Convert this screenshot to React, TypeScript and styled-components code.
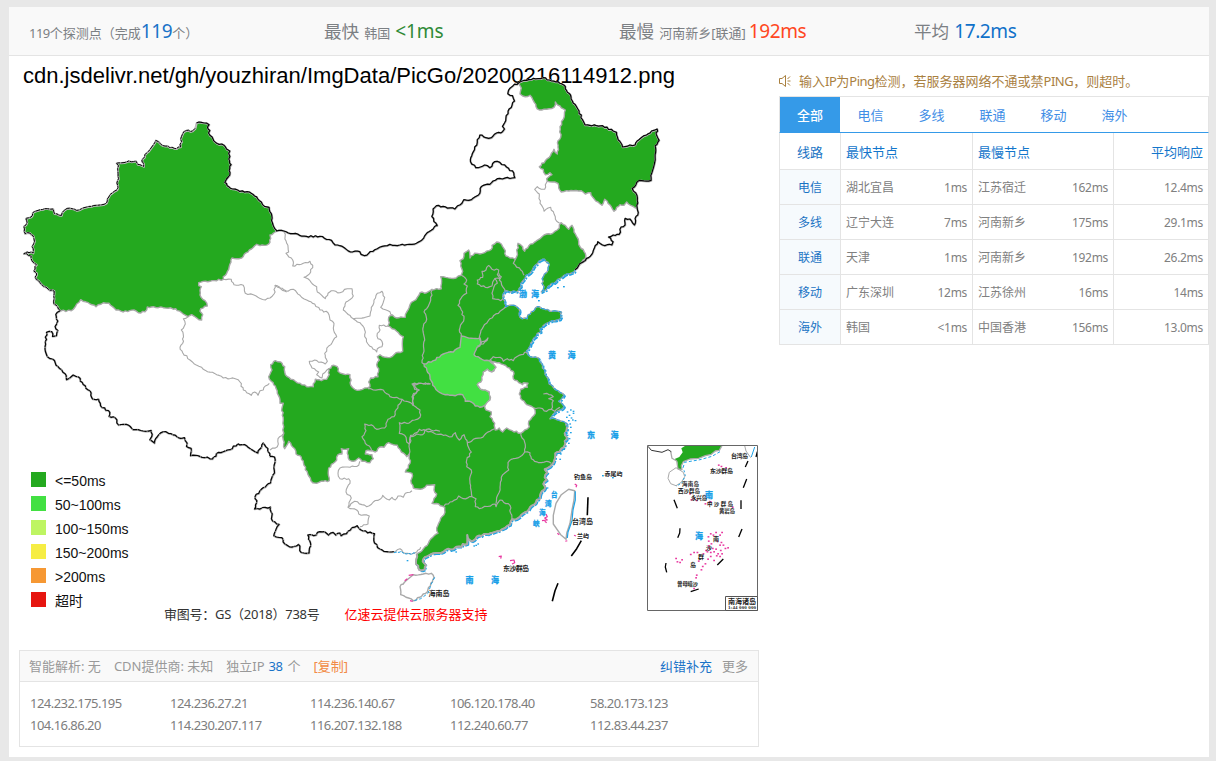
import React from "react";
import styled, { createGlobalStyle } from "styled-components";

const GlobalStyle = createGlobalStyle`
  * { box-sizing: border-box; }
  body {
    margin: 0;
    background: #e8e8e8;
    font-family: "Noto Sans", "Noto Sans CJK SC", sans-serif;
    font-size: 13px;
    color: #888;
  }
`;

/* ---------- layout ---------- */
const Page = styled.div`
  padding: 7px 7px 4px 9px;
  height: 761px;
  overflow: hidden;
`;
const Card = styled.main`
  background: #fff;
  height: 750px;
`;
const StatBar = styled.header`
  display: flex;
  height: 49px;
  padding-left: 20px;
  background: #f9f9f9;
  border-bottom: 1px solid #e4e4e4;
`;
const Stat = styled.div`
  width: 295px;
  height: 48px;
  line-height: 49px;
  white-space: nowrap;
  color: #7c8084;
`;
const StatName = styled.span`
  font-size: 17.6px;
  margin-right: 5px;
`;
const StatValue = styled.span<{ $color: string; $gap?: number; $track?: number }>`
  font-size: 19px;
  color: ${(p) => p.$color};
  margin-left: ${(p) => p.$gap ?? 4}px;
  letter-spacing: ${(p) => p.$track ?? -0.4}px;
`;
const Tight = styled.span<{ $track?: number }>`
  letter-spacing: ${(p) => p.$track ?? -0.5}px;
`;
const Columns = styled.div`
  display: flex;
  justify-content: space-between;
`;
const Left = styled.section`
  width: 750px;
`;
const Right = styled.aside`
  width: 430px;
  padding-top: 14px;
`;

/* ---------- map ---------- */
const MapStage = styled.div`
  position: relative;
  height: 594px;
`;
const MapTitle = styled.h1`
  margin: 0;
  padding: 7px 0 0 14px;
  font: 400 22.03px/26px "Liberation Sans", sans-serif;
  color: #000;
  white-space: nowrap;
`;
const MapSvg = styled.svg`
  position: absolute;
  left: 0;
  top: 0;
`;
const Legend = styled.ul`
  list-style: none;
  margin: 0;
  padding: 380px 0 0 22px;
`;
const LegendItem = styled.li`
  display: flex;
  align-items: center;
  gap: 9px;
  height: 24px;
  font: 14px/24px "Liberation Sans", "Noto Sans CJK SC", sans-serif;
  color: #111;
`;
const Swatch = styled.i<{ $color: string }>`
  width: 15px;
  height: 15px;
  margin-top: -3px;
  background: ${(p) => p.$color};
`;
const Caption = styled.p`
  display: flex;
  gap: 25px;
  margin: -9px 0 0 155px;
  line-height: 20px;
  color: #333;
  white-space: nowrap;
`;
const Sponsor = styled.span`
  color: #f00;
`;

/* ---------- resolved addresses ---------- */
const IpBox = styled.div`
  width: 740px;
  height: 97px;
  margin-left: 10px;
  border: 1px solid #e4e4e4;
`;
const IpHead = styled.div`
  display: flex;
  height: 31px;
  padding: 0 10px 0 9px;
  line-height: 30px;
  background: #f9f9f9;
  border-bottom: 1px solid #e4e4e4;
  color: #999;
  white-space: nowrap;
`;
const HeadItem = styled.span<{ $gap?: number; $color?: string; $push?: boolean }>`
  margin-right: ${(p) => p.$gap ?? 0}px;
  margin-left: ${(p) => (p.$push ? "auto" : 0)};
  color: ${(p) => p.$color ?? "inherit"};
`;
const IpGrid = styled.div`
  display: grid;
  grid-template-columns: repeat(5, 140px);
  padding: 10px 0 0 10px;
  line-height: 22px;
  color: #7d7d7d;
  letter-spacing: -0.54px;
`;

/* ---------- results ---------- */
const Notice = styled.div`
  display: flex;
  align-items: center;
  gap: 8px;
  height: 22px;
  margin-bottom: 4px;
  line-height: 22px;
  color: #a9803f;
  white-space: nowrap;
`;
const Tabs = styled.nav`
  display: flex;
  height: 37px;
  border: 1px solid #e4e4e4;
  border-bottom: 1px solid #359ae8;
`;
const Tab = styled.a<{ $active?: boolean }>`
  width: ${(p) => (p.$active ? 60 : 61)}px;
  line-height: 36px;
  text-align: center;
  font-weight: ${(p) => (p.$active ? 500 : 400)};
  color: ${(p) => (p.$active ? "#fff" : "#3f8ee6")};
  background: ${(p) => (p.$active ? "#359ae8" : "transparent")};
`;
const Table = styled.div`
  border-left: 1px solid #e4e4e4;
`;
const Row = styled.div<{ $head?: boolean }>`
  display: grid;
  grid-template-columns: 60px 132px 141px 96px;
  grid-template-rows: 100%;
  height: ${(p) => (p.$head ? 37 : 35)}px;
  line-height: ${(p) => (p.$head ? 38 : 36)}px;
  font-size: ${(p) => (p.$head ? 13 : 12)}px;
  color: ${(p) => (p.$head ? "#1376cb" : "#808080")};
  border-bottom: 1px solid #e4e4e4;
`;
const Cell = styled.div<{ $align?: string; $label?: boolean; $head?: boolean }>`
  display: flex;
  justify-content: ${(p) => p.$align ?? "space-between"};
  padding: 0 5px;
  border-left: ${(p) => (p.$label ? "none" : "1px solid #e4e4e4")};
  color: ${(p) => (p.$label ? "#1a73c4" : "inherit")};
  background: ${(p) => (p.$label && !p.$head ? "#f6fafd" : "transparent")};
  &:last-child {
    border-right: 1px solid #e4e4e4;
  }
`;

/* ---------- map geometry ---------- */
// Points are stored in a third-of-a-pixel grid relative to the sheet origin (ox, oy).
const at = (ox: number, oy: number, pts: string) =>
  pts
    .trim()
    .split(/\s+/)
    .map((p) => {
      const [x, y] = p.split(",").map(Number);
      return `${(ox + x / 3).toFixed(1)},${(oy + y / 3).toFixed(1)}`;
    })
    .join(" ");

// Breaks long straight runs with small offsets so borders look surveyed, not ruled.
// The offset depends only on the two end points, so shared borders stay identical.
const rough = (pts: string) => {
  const list = pts.split(" ").map((p) => p.split(",").map(Number));
  const out: string[] = [];
  list.forEach(([x, y], i) => {
    out.push(`${x},${y}`);
    const next = list[i + 1];
    if (!next) return;
    const dx = next[0] - x;
    const dy = next[1] - y;
    const len = Math.hypot(dx, dy);
    if (len < 4) return;
    const parts = Math.min(6, Math.round(len / 2.4));
    const flip = dx > 0 || (dx === 0 && dy > 0) ? 1 : -1;
    for (let k = 1; k < parts; k++) {
      const px = x + (dx * k) / parts;
      const py = y + (dy * k) / parts;
      const h = Math.sin(px * 12.9 + py * 78.2) * 0.75 * flip;
      out.push(`${(px - (dy / len) * h).toFixed(1)},${(py + (dx / len) * h).toFixed(1)}`);
    }
  });
  return out.join(" ");
};

const line = (...parts: string[]) => "M" + parts.join(" L");
const shape = (...parts: string[]) => line(...parts) + "Z";

const nw = (p: string) => rough(at(10, 110, p));
const ne = (p: string) => rough(at(400, 70, p));
const sw = (p: string) => rough(at(30, 300, p));
const mid = (p: string) => rough(at(260, 220, p));
const east = (p: string) => rough(at(400, 230, p));
const south = (p: string) => rough(at(240, 380, p));
const se = (p: string) => rough(at(390, 400, p));
const sea = (p: string) => at(390, 400, p);
const inset = (p: string) => at(640, 435, p);

const xjA = nw("560,40 575,38 598,45 593,52 600,62 596,70 607,82 617,98 628,104 636,103 650,118 660,124 657,148 664,165 658,182 660,196 650,208 645,218 652,228 668,238 690,245 712,246 730,254 748,272 764,290 778,293 786,318 788,340 800,362");
const xjB = nw("796,366 780,375 782,385 776,402 750,407 740,403 718,420 695,444 666,444 660,462 652,485 640,500 640,508 600,514 566,518 566,527 574,530 570,555 585,572 592,588 572,596 570,604 578,614 575,630 560,624 545,614 534,620 520,612 497,596 460,593 430,590 412,591 405,605 385,608 372,600 340,606 318,600 297,580 280,578 258,590 235,578 212,569 200,582 184,602 152,603");
const xjC = nw("152,603 132,582 133,544 115,538 90,518 76,502 80,490 72,484 80,465 66,452 64,438 42,432 52,427 70,430 67,410 74,395 70,378 60,370 46,372 42,350 52,338 48,326 64,322 68,310 85,302 105,297 130,298 134,312 155,317 163,302 172,296 200,302 215,297 245,290 290,280 297,262 307,250 322,240 325,200 326,168 320,160 350,157 378,154 384,164 402,170 396,154 410,130 438,92 452,103 480,114 500,117 512,112 515,80 522,66 530,62 548,64 556,56");

const northBorder = [
  mid("50,34 72,34 100,42 140,50 180,50 215,62 226,76 240,78 272,97 300,96 304,104 314,108 345,90 390,74 420,76 456,74 482,64 498,44 520,28 532,16"),
  ne("112,468 96,440 100,418 110,408 130,410 165,418 180,406 192,390 215,390 236,376 245,350 270,344 280,334 300,326 345,324 342,310 320,292 300,278 284,276 270,294 254,286 228,294 212,276 216,258 224,240 240,196 258,204 275,204 290,190 308,186 314,178 308,170 314,160 325,124 344,94 338,78 324,72 326,62 340,48 356,40"),
];
const hljTop = ne("356,40 380,32 400,26 430,24 455,34 475,36 492,46 500,62 512,76 520,100 534,118 548,150 556,166 590,168 608,168 640,184 650,188 655,210 668,232 690,226 706,226 712,214 740,196 755,184 772,178 770,196 778,212 766,228 766,262 756,310 754,332 718,332 708,346 697,356 708,370 714,400 712,414");
const hljIn = ne("706,414 692,406 680,396 672,406 660,404 650,412 642,424 634,410 622,394 614,388 606,406 594,396 582,386 572,368 556,372 544,362 520,362 500,362 484,366 476,354 474,340 464,336 442,334 440,326 456,314 450,308 436,314 430,298 418,290 436,272 448,262 462,238 472,252 474,232 474,212 482,202 480,170 490,148 496,120 480,108 466,96 462,112 440,118 418,120 408,110 400,92 390,76 376,80 368,78 360,72 364,54");
const koreaBorder = ne("712,414 714,436 706,446 704,466 690,448 676,446 676,466 664,472 658,494 640,496 626,502 640,516 636,526 608,526 594,516 584,534 576,554 560,566 536,588 526,600");

const innerWest = [
  east("354,40 350,80 346,88 330,84 318,78 312,56 304,42 290,36 276,46 274,58 254,68 240,72 224,70 210,84 206,60 192,70 190,86 180,92 182,108 188,124 184,136 168,144 122,140 124,176 96,180"),
  mid("516,208 500,218 480,218 472,232 450,254 440,276 436,292 410,294 398,286 386,292 388,308 384,318 396,326 410,334 430,350 428,394 408,398 396,410 376,412 360,404 352,410 358,420 350,434 356,446 354,470 332,474 326,486 330,500 314,504 300,510 284,508 272,496 270,464 250,462 234,454 232,440 222,436 206,446 208,464 200,478 184,482 166,478 160,500 140,500 120,490 106,484 92,478 82,470 74,456 74,440 62,426 46,422 32,434 36,450 26,470 34,484 46,498 52,520 60,540"),
  south("120,70 130,70 126,84 130,120 130,180 134,206 146,184 152,190 164,206 168,222 184,232 192,256 206,288 218,308 230,310 250,304 268,302 266,264 280,250 290,240 294,224 306,222 304,206 326,206 322,220 328,240 346,242 356,234 366,244 390,248 400,236 396,224 376,222 378,212 396,212 406,216 418,202 432,202 446,188 460,194 472,196 484,216 500,230 508,222 510,250 496,276 516,280 514,310 520,324 548,326 560,316 584,314"),
  se("132,270 140,282 126,310 146,312 164,322 162,344 150,362 140,384 144,400 128,412 112,436 96,452 80,462"),
];
const southCoast = se("80,462 78,486 88,510 104,508 108,496 98,484 104,472 130,460 160,456 175,446 190,448 200,440 215,440 218,432 232,432 232,405 238,420 246,424 260,410 274,408 282,402 300,400 330,392 345,384 360,374 366,358 385,354 400,340 412,334 420,322 432,314 440,300 450,296 452,280 466,262 460,252 470,240 464,232 472,218 464,208 480,200 492,184 496,160 508,156 514,146 524,136 524,124 530,118 524,100 530,88 528,72");
const eastCoast = east("500,582 484,574 466,566 450,566 460,552 480,540 492,530 476,514 492,496 474,482 460,472 448,462 440,440 424,400 418,386 400,382 384,374 380,362 392,340 408,320 412,310 422,306 420,296 440,280 456,272 480,268 484,246 456,244 430,236 412,230 400,244 384,254 382,266 366,266 358,256 358,238 350,230 334,226 316,232 314,214 308,200 316,182 334,186 356,182 366,156 378,136 396,122 402,110 416,94 434,88 448,104 444,120 430,140 426,160 432,170 424,186 438,180 450,166 480,146 500,132 522,126 526,120");
const liaoning = east("540,104 556,86 556,70 540,50 530,20 522,6 516,-14 506,-2 496,-14 484,-22 472,0 458,10 440,12 420,26 410,32 386,48 374,64 368,50 354,40");

const henan = east("184,318 200,322 240,324 242,340 228,360 222,374 246,388 268,392 284,404 288,416 276,426 262,418 250,426 252,442 246,456 232,464 242,478 268,486 270,506 266,516 254,526 240,532 226,528 214,516 196,514 188,494 150,496 120,488 98,466 90,440 72,402 100,392 130,372 160,366 180,352");
const anhui = east("272,392 290,398 310,404 322,412 340,424 340,446 356,458 368,464 370,458 384,460 382,472 362,478 358,492 366,510 380,524 402,534 406,550 396,562 386,574 388,590 374,600 362,610 336,602 320,594 308,606 298,594 286,600 284,580 270,560 274,546 258,540 254,528 270,510 268,486 242,478 232,464 246,450 250,426 262,418 276,426 288,412");

const provinceLines = [
  east("96,180 92,210 80,236 72,246 80,268 70,290 74,330 70,370 66,398 72,402"),
  east("184,136 200,150 192,162 202,168 200,190 186,200 174,226 184,240 192,266 178,300 184,318"),
  east("316,232 300,244 270,266 250,290 240,314 242,340 264,324 250,342 232,348"),
  east("268,392 280,380 300,382 310,394 322,386 340,392 350,380 364,374 380,366"),
  east("266,106 276,118 296,120 292,134 300,146 284,146 278,156 276,168 256,172 232,162 232,150 248,142 246,124 258,120 266,106"),
  east("296,130 304,140 298,150 314,178 312,196 302,212 278,206 276,190 282,170 292,160 284,146"),
  east("346,88 340,100 362,120 372,136"),
  east("402,534 420,534 440,544 454,538 464,544 480,532"),
  east("454,538 460,512 446,506 460,500 440,490 430,492"),
  east("90,462 64,460 40,464 52,484 38,496 40,528"),
  se("392,100 406,134 404,156 420,158 424,176 446,188 470,184 484,190"),
  se("60,130 62,106 80,98 88,88 108,92 130,98 160,106 186,110 196,98 208,120 222,104 232,128 244,156 230,180 230,200 244,210 240,250 246,290"),
  se("232,128 250,118 272,114 300,94 314,86"),
  se("162,318 180,306 200,298 206,288 220,296 246,290 258,296 256,320 268,326 316,312 318,320 330,300 360,316 362,340 366,358"),
  se("404,156 390,170 370,176 354,188 356,210 334,232 330,262 318,310"),
  south("384,26 400,30 430,30 450,50 470,52 486,58 500,64 520,76 540,90 540,112 524,120 500,130 478,128 478,160 494,166 500,186 508,192"),
  south("486,58 474,76 462,110 444,118 434,144 410,148 400,138 374,132 378,152 366,170 376,190 392,204 396,214"),
  south("508,222 508,192 512,170 530,162 548,164 560,148 600,154"),
  south("520,76 516,50 538,30 524,28 516,12 540,10 572,12"),
];

const plainLines = [
  ne("442,334 436,344 434,358 424,358 412,350 404,358 418,372 420,400 432,424 452,412 466,440 470,454 484,460"),
  mid("72,36 80,70 86,96 78,100 98,120 98,138 130,130 150,124 158,136 152,156 132,172 150,182 170,200 172,216 196,236 204,220 214,212 240,218 262,206 276,206 280,228 258,246 250,270 280,296 330,288 334,270 342,240 352,220 366,214 374,232 362,262 384,272 398,286"),
  mid("280,296 300,308 314,330 314,350 324,372 350,396 352,386 366,380 366,364 354,356 352,340 360,330 358,316 384,318"),
  nw("640,508 664,508 672,524 700,526 706,550 730,554 766,570 780,564 792,552 796,526 830,546"),
  mid("44,196 60,204 84,214 100,208 120,226 140,240 164,252 180,270 204,278 210,300 222,310 220,324 230,350 206,378 194,400 202,424 196,432 164,420 148,424 156,444 176,456 170,464 186,474 188,462 206,446"),
  sw("474,50 460,56 466,72 454,90 460,104 458,130 450,142 458,158 480,180 520,208 560,224 580,234 616,236 630,246 640,270 650,278 664,286 674,276 684,286 690,272 700,270 706,258 718,250"),
  sw("760,402 744,416 742,440 728,444 720,450"),
  south("360,244 356,256 330,262 300,264 294,280 300,296 326,296 330,310 318,336 334,354 324,382 344,364 380,380 400,366 420,358 428,346 448,360 456,352 466,360 474,348 490,352 496,340 516,332"),
  south("324,382 350,390 356,402 388,408 384,432 360,440"),
  south("462,516 480,506 488,516 510,522 530,516 542,502"),
];

const swBorder = [
  sw("90,34 78,44 84,64 76,80 84,92 80,108 68,110 66,96 50,98 46,140 52,170 68,178 84,200 106,222 110,240 130,226 146,232 160,254 184,280 188,298 206,298 212,318 240,338 238,350 256,354 266,376 290,374 310,390 340,394 364,392 366,410 360,420 374,430 382,412 400,396 424,402 446,414 464,414 472,430 470,440 484,446 482,468 510,470 548,478 566,458 600,450 624,432 650,438 684,460 700,430 714,446 720,470 734,472 734,520 722,550 700,564 676,590 680,610 674,628 722,622 728,664 748,674 732,708 756,714 764,732"),
  south("150,502 162,500 176,494 184,518 208,520 212,490 204,466 222,468 240,456 254,456 266,466 280,458 288,466 300,460 304,468 320,462 336,444 352,438 370,454 404,462 404,490 420,508 440,516 462,516"),
];

const hainan = se("70,524 100,522 124,520 132,534 122,550 112,576 90,592 70,602 48,592 32,584 30,560 48,542");
const taiwan = sea("536,268 554,272 552,300 546,330 540,370 530,400 528,418 512,404 490,372 490,346 498,310 514,284");

const seaNames: [string, number, number, number?][] = [
  ["渤", 519, 297], ["海", 531, 297], ["黄", 548, 358], ["海", 567.5, 358],
  ["东", 587, 437.5], ["海", 610.5, 437.5], ["南", 465.5, 583], ["海", 491, 583],
  ["台", 551, 496.5, 6.5], ["湾", 545, 505.5, 6.5], ["海", 539, 515, 6.5], ["峡", 533, 526, 6.5],
  ["南", 705, 498], ["海", 695, 539],
];
const islandNames: [string, number, number, number, number][] = [
  ["钓鱼岛", 574, 479, 6, 18], ["赤尾屿", 604.5, 476, 6, 18], ["台湾岛", 572, 523.5, 7, 21],
  ["兰屿", 577, 538, 6, 12], ["东沙群岛", 503, 570.5, 7, 26], ["海南岛", 428.5, 596, 7, 21],
  ["台湾岛", 731, 458, 6, 17], ["东沙群岛", 710, 473, 6, 23], ["海南岛", 682, 486, 5.5, 17],
  ["西沙群岛", 678, 493, 5.5, 22], ["永兴岛", 691, 500, 5.5, 16], ["中沙群岛", 707, 506, 5.5, 26],
  ["黄岩岛", 719, 513, 5.5, 16], ["南", 713, 541, 6, 6], ["沙", 706, 550, 6, 6],
  ["群", 698, 559, 6, 6], ["岛", 690, 567, 6, 6], ["曾母暗沙", 677, 586, 5.5, 21],
];
const reefs =
  "205,305 212,296 220,300 228,292 246,292 240,300 206,318 214,326 232,318 244,322 256,340 264,338 206,332 218,340 228,342 240,330 250,330 202,350 212,352 222,350 234,356 246,356 198,346 190,356 172,352 162,352 152,358 204,372 212,364 222,376 196,386 188,394 184,404 170,420 168,428 126,374 120,382 108,370 112,380 162,460 176,378 236,90 244,94 258,98 150,176 162,190 154,194 170,196 196,206 206,202 212,200 278,216 230,362 242,346 208,340 240,364";
const offshore =
  "540,28 530,34 548,32 536,44 542,52 528,50 534,60 546,58 538,70 528,76 540,80 532,88 526,96 540,96 530,104 536,114 534,128 526,122 520,146 508,176 510,160 470,262 444,292 262,430 250,436 256,434 196,454 182,452 50,480 554,60 548,38";

const ChinaMap = () => (
  <MapSvg width="750" height="594" viewBox="9 56 750 594" fill="none" strokeLinejoin="round">
    <path
      d={line(southCoast, eastCoast)}
      stroke="#1fa2e6"
      strokeWidth="1.8"
      transform="translate(1 1)"
      strokeDasharray="5 1 2 2 7 1"
    />
    <g stroke="#a9a9a9" strokeWidth="1.4">
      <path d={shape(xjA, xjB, xjC)} fill="#24a91f" />
      <path d={shape(hljTop, hljIn)} fill="#24a91f" />
      <path d={shape(...innerWest, southCoast, eastCoast, liaoning)} fill="#24a91f" />
      <path d={shape(henan)} fill="#42e042" />
      <path d={shape(anhui)} fill="#fff" />
      <path d={line(southCoast)} strokeWidth="2" />
      {provinceLines.map((d) => <path key={d} d={line(d)} strokeWidth="1.2" />)}
      {plainLines.map((d) => <path key={d} d={line(d)} strokeWidth="1.1" />)}
      <path d={shape(hainan)} fill="#fff" />
      <path d={shape(taiwan)} fill="#fff" />
    </g>
    <g stroke="#bcbcbc" strokeWidth="2.1">
      <path d={line(xjC, xjA, ...northBorder, hljTop, koreaBorder)} />
      <path d={line(...swBorder)} />
    </g>
    <g stroke="#050505" strokeWidth="1.2" transform="translate(-0.2 -0.3)">
      <path d={line(xjC)} strokeWidth="1" strokeDasharray="5 0.8 3 0.6" />
      <path d={line(xjA, ...northBorder, hljTop, koreaBorder)} />
      <path d={line(...swBorder)} strokeDasharray="9 0.6 5 0.5" />
    </g>
    <g stroke="#1fa2e6" strokeWidth="1">
      <path d={line(eastCoast)} strokeDasharray="6 2 3 1" />
      <path d={line(sea("556,274 556,300 549,330 546,362 534,396 532,414"))} strokeWidth="1.2" />
      <path d={line(sea("134,532 124,552 114,580 92,596 66,604"))} strokeDasharray="3 2" />
      <path d={line(south("462,518 484,514 500,522 528,520"))} strokeDasharray="3 1" />
    </g>
    <g fill="#1fa2e6">
      {offshore.split(" ").map((p) => {
        const [x, y] = p.split(",").map(Number);
        return <rect key={p} x={390 + x / 3} y={400 + y / 3} width="1.7" height="1.3" />;
      })}
      {[[557, 287], [563, 286], [553, 283], [538, 300], [612, 477], [602, 475]].map(([x, y]) => (
        <rect key={x} x={x} y={y} width="1.8" height="1.4" />
      ))}
    </g>
    <g stroke="#e838a0" strokeWidth="1.2">
      <path d={line(sea("326,470 334,468 332,476"))} />
      <path d={line(sea("360,482 372,480 374,488 366,492"))} />
      <path d={line(sea("554,252 560,256 558,262"))} />
      <path d={line(sea("468,342 472,350 464,354 472,360 456,362"))} />
      <path d={line(sea("464,364 470,368"))} />
      <path d={line(sea("502,400 508,404"))} />
      <path d={line(sea("526,424 532,422"))} />
      <path d={line(sea("552,406 558,408"))} />
      <path d={line(sea("44,542 52,536"))} />
      <path d={line(sea("56,526 70,524"))} />
      <path d={line(sea("60,602 68,604"))} />
    </g>
    <g stroke="#000" strokeWidth="1.6">
      <path d={line(sea("594,292 592,346"))} />
      <path d={line(sea("574,422 560,446 544,468"))} />
      <path d={line(sea("504,550 495,572 487,604"))} />
    </g>

    {/* South China Sea inset */}
    <path
      d={shape(inset("136,32 246,32 238,46 226,48 214,58 196,62 176,70 150,72 130,80 124,92 126,104 114,102 112,80 104,72 118,66 128,52 124,40"))}
      fill="#24a91f"
    />
    <path d={line(inset("246,32 238,46 226,48 214,58 196,62 176,70 150,72 130,80 124,92 126,104 114,102 110,78 96,70 92,50"))} stroke="#a9a9a9" strokeWidth="1.3" />
    <path d={line(inset("240,50 216,64 180,74 134,82 128,102"))} stroke="#1fa2e6" strokeDasharray="3 2" />
    <path d={line(inset("24,34 34,46 66,52 84,44 94,50"))} stroke="#333" />
    <path d={shape(inset("88,112 108,98 130,112 134,125 124,142 108,152 92,146 84,130"))} stroke="#a9a9a9" />
    <path d={line(inset("132,106 136,122 126,144 108,154"))} stroke="#1fa2e6" strokeDasharray="2 2" />
    <path d={line(inset("314,32 318,48 332,68"))} stroke="#a9a9a9" />
    <path d={line(inset("334,66 344,36"))} stroke="#1fa2e6" />
    <g stroke="#000" strokeWidth="1.3">
      {["352,50 348,66", "324,78 316,96", "320,132 310,158", "303,196 303,222", "306,282 296,306", "250,372 232,390", "176,462 152,470", "78,384 76,396 80,412", "120,280 119,294 113,308", "102,194 112,220"].map((p) => (
        <path key={p} d={line(inset(p))} />
      ))}
    </g>
    <g fill="#e838a0">
      {reefs.split(" ").map((p) => {
        const [x, y] = p.split(",").map(Number);
        return <rect key={p} x={639.2 + x / 3} y={434.4 + y / 3} width="1.8" height="1.5" />;
      })}
    </g>
    <rect x="647.5" y="445.5" width="110" height="165" stroke="#666" />
    <rect x="725.5" y="596.5" width="32" height="14" stroke="#555" fill="#fff" />

    <g fontFamily='"Noto Sans CJK SC", sans-serif' fontWeight="900" fill="#1a9fe8" stroke="#1a9fe8" strokeWidth="0.25">
      {seaNames.map(([t, x, y, s]) => (
        <text key={`${x}${y}`} x={x} y={y} fontSize={s ?? 8}>{t}</text>
      ))}
    </g>
    <g fontFamily='"Noto Sans CJK SC", sans-serif' fontWeight="700" fill="#222">
      {islandNames.map(([t, x, y, s, w]) => (
        <text key={`${x}${y}`} x={x} y={y} fontSize={s} textLength={w}>{t}</text>
      ))}
      <text x="728" y="603.5" fontSize="7" textLength="28">南海诸岛</text>
      <text x="728" y="609.3" fontSize="5" textLength="28" fontFamily='"Liberation Serif", serif'>1:44 000 000</text>
    </g>
  </MapSvg>
);

/* ---------- data ---------- */
const legend: [string, string][] = [
  ["#24a91f", "<=50ms"],
  ["#42e042", "50~100ms"],
  ["#bef562", "100~150ms"],
  ["#f6ed44", "150~200ms"],
  ["#f69833", ">200ms"],
  ["#e61610", "超时"],
];
const ips = [
  "124.232.175.195", "124.236.27.21", "114.236.140.67", "106.120.178.40", "58.20.173.123",
  "104.16.86.20", "114.230.207.117", "116.207.132.188", "112.240.60.77", "112.83.44.237",
];
const rows = [
  ["电信", "湖北宜昌", "1ms", "江苏宿迁", "162ms", "12.4ms"],
  ["多线", "辽宁大连", "7ms", "河南新乡", "175ms", "29.1ms"],
  ["联通", "天津", "1ms", "河南新乡", "192ms", "26.2ms"],
  ["移动", "广东深圳", "12ms", "江苏徐州", "16ms", "14ms"],
  ["海外", "韩国", "<1ms", "中国香港", "156ms", "13.0ms"],
];

export default function App() {
  return (
    <Page>
      <GlobalStyle />
      <Card>
        <StatBar>
          <Stat>
            <Tight>119</Tight>个探测点（完成
            <StatValue $color="#1a73c8" $gap={0}>119</StatValue>个）
          </Stat>
          <Stat>
            <StatName>最快</StatName>韩国
            <StatValue $color="#2f8a36" $gap={5} $track={-0.1}>&lt;1ms</StatValue>
          </Stat>
          <Stat>
            <StatName>最慢</StatName>河南新乡[联通]
            <StatValue $color="#ff4722" $gap={3}>192ms</StatValue>
          </Stat>
          <Stat>
            <StatName>平均</StatName>
            <StatValue $color="#1071c9" $gap={0}>17.2ms</StatValue>
          </Stat>
        </StatBar>
        <Columns>
          <Left>
            <MapStage>
              <MapTitle>cdn.jsdelivr.net/gh/youzhiran/ImgData/PicGo/20200216114912.png</MapTitle>
              <ChinaMap />
              <Legend>
                {legend.map(([color, label]) => (
                  <LegendItem key={label}>
                    <Swatch $color={color} />
                    {label}
                  </LegendItem>
                ))}
              </Legend>
              <Caption>
                <Tight $track={-0.26}>审图号：GS（2018）738号</Tight>
                <Sponsor>亿速云提供云服务器支持</Sponsor>
              </Caption>
            </MapStage>
            <IpBox>
              <IpHead>
                <HeadItem $gap={13}>智能解析: 无</HeadItem>
                <HeadItem $gap={13}>CDN提供商: 未知</HeadItem>
                <HeadItem $gap={4}>独立IP</HeadItem>
                <HeadItem $gap={5} $color="#1a73c8"><Tight>38</Tight></HeadItem>
                <HeadItem $gap={13}>个</HeadItem>
                <HeadItem $color="#f28b46">[复制]</HeadItem>
                <HeadItem $push $gap={10} $color="#1a73c8">纠错补充</HeadItem>
                <HeadItem>更多</HeadItem>
              </IpHead>
              <IpGrid>
                {ips.map((ip) => <span key={ip}>{ip}</span>)}
              </IpGrid>
            </IpBox>
          </Left>
          <Right>
            <Notice>
              <svg width="12" height="12" viewBox="0 0 12 12" fill="none" stroke="#a9803f">
                <path d="M.5 3.5H3L6.5 .5V11.5L3 8.5H.5ZM8.5 4L11 1.5M8.5 6H11.5M8.5 8L11 10.5" />
              </svg>
              <span>
                输入<Tight>IP</Tight>为<Tight>Ping</Tight>检测，若服务器网络不通或禁<Tight>PING</Tight>，则超时。
              </span>
            </Notice>
            <Tabs>
              {["全部", "电信", "多线", "联通", "移动", "海外"].map((t, i) => (
                <Tab key={t} $active={i === 0}>{t}</Tab>
              ))}
            </Tabs>
            <Table>
              <Row $head>
                <Cell $align="center" $label $head>线路</Cell>
                <Cell>最快节点</Cell>
                <Cell>最慢节点</Cell>
                <Cell $align="flex-end">平均响应</Cell>
              </Row>
              {rows.map(([name, fast, fastMs, slow, slowMs, avg]) => (
                <Row key={name}>
                  <Cell $align="center" $label>{name}</Cell>
                  <Cell><span>{fast}</span><Tight $track={-0.3}>{fastMs}</Tight></Cell>
                  <Cell><span>{slow}</span><Tight $track={-0.3}>{slowMs}</Tight></Cell>
                  <Cell $align="flex-end"><Tight $track={-0.3}>{avg}</Tight></Cell>
                </Row>
              ))}
            </Table>
          </Right>
        </Columns>
      </Card>
    </Page>
  );
}
